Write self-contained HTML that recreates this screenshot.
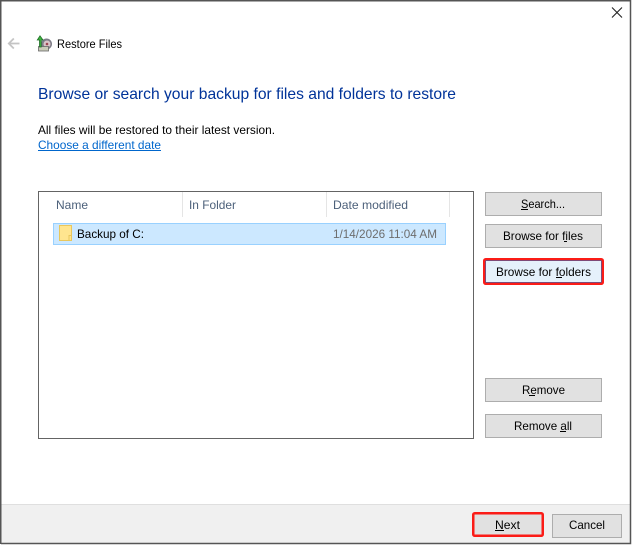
<!DOCTYPE html>
<html lang="en"><head><meta charset="utf-8"><title>Restore Files</title>
<style>
html,body{margin:0;padding:0;background:#fff;width:633px;height:546px;overflow:hidden}
svg{display:block}
text{font-family:"Liberation Sans",Arial,sans-serif;font-size:12px;fill:#000}
</style></head><body>
<svg width="633" height="546" viewBox="0 0 633 546" xmlns="http://www.w3.org/2000/svg">
<rect width="633" height="546" fill="#fff"/>
<rect x="1" y="504" width="629" height="39" fill="#f0f0f0"/>
<rect x="1" y="504" width="629" height="1" fill="#dfdfdf"/>
<path d="M.75 544V.75H630.5V543.5H1" fill="none" stroke="#555" stroke-width="1.5"/>

<path d="M612 7.5l10 10M622 7.5l-10 10" stroke="#222" stroke-width="1.1" fill="none"/>
<path d="M19.500 43.500H9M13.800 38.500l-5 5 5 5" stroke="#c4c4c4" stroke-width="1.800" fill="none"/>

<g>
<ellipse cx="46.500" cy="44" rx="5.500" ry="5.500" fill="#7d7d88"/>
<ellipse cx="47" cy="44" rx="3.500" ry="3.500" fill="#d8c4c8"/>
<circle cx="47" cy="44" r="1.300" fill="#9a4450"/>
<rect x="38.500" y="46.500" width="10" height="4.500" fill="#c9cbb8" stroke="#666" stroke-width=".8"/>
<path d="M39.500 47V40H37.300L40 35.800l3 4.200h-1.800V47z" fill="#3fb53f" stroke="#1f6f26" stroke-width=".8"/>
</g>
<text x="57" y="48" textLength="65" lengthAdjust="spacingAndGlyphs">Restore Files</text>

<text x="38" y="99" style="font-size:16px;fill:#003399" textLength="418" lengthAdjust="spacingAndGlyphs">Browse or search your backup for files and folders to restore</text>
<text x="38" y="134" textLength="237" lengthAdjust="spacingAndGlyphs">All files will be restored to their latest version.</text>
<text x="38" y="149" style="fill:#0066cc" textLength="123" lengthAdjust="spacingAndGlyphs">Choose a different date</text>
<rect x="38" y="150" width="123" height="1" fill="#0066cc"/>

<rect x="38.500" y="191.500" width="435" height="247" fill="#fff" stroke="#646464"/>
<rect x="182" y="192" width="1" height="25" fill="#e5e5e5"/>
<rect x="326" y="192" width="1" height="25" fill="#e5e5e5"/>
<rect x="449" y="192" width="1" height="25" fill="#e5e5e5"/>
<text x="56" y="209" style="fill:#4c607a" textLength="32" lengthAdjust="spacingAndGlyphs">Name</text>
<text x="189" y="209" style="fill:#4c607a" textLength="47" lengthAdjust="spacingAndGlyphs">In Folder</text>
<text x="333" y="209" style="fill:#4c607a" textLength="75" lengthAdjust="spacingAndGlyphs">Date modified</text>

<rect x="53.500" y="223.500" width="392" height="21" fill="#cce8ff" stroke="#99d1ff"/>
<path d="M59.500 225.500H71.500V240.500H59.500z" fill="#ffe58f" stroke="#e9c75c"/>
<path d="M69 240.500V235.500H71.500" fill="none" stroke="#e9c75c"/>
<text x="77" y="238" textLength="67" lengthAdjust="spacingAndGlyphs">Backup of C:</text>
<text x="333" y="238" style="fill:#6d6d6d" textLength="104" lengthAdjust="spacingAndGlyphs">1/14/2026 11:04 AM</text>

<rect x="485.500" y="192.500" width="116" height="23" fill="#e1e1e1" stroke="#adadad"/>
<text x="521" y="208" textLength="44" lengthAdjust="spacingAndGlyphs">Search...</text>
<rect x="521" y="209" width="7" height="1" fill="#000"/>

<rect x="485.500" y="224.500" width="116" height="23" fill="#e1e1e1" stroke="#adadad"/>
<text x="503" y="240" textLength="80" lengthAdjust="spacingAndGlyphs">Browse for files</text>
<rect x="564" y="241" width="3" height="1" fill="#000"/>

<rect x="485.500" y="260.500" width="116" height="22" fill="#e5f1fb" stroke="#0078d7"/>
<rect x="484.250" y="259.250" width="118.500" height="24.500" rx="1.500" fill="none" stroke="#fb1c17" stroke-width="2.500"/>
<text x="496" y="276" textLength="95" lengthAdjust="spacingAndGlyphs">Browse for folders</text>
<rect x="556" y="277" width="6" height="1" fill="#000"/>

<rect x="485.500" y="378.500" width="116" height="23" fill="#e1e1e1" stroke="#adadad"/>
<text x="522" y="394" textLength="43" lengthAdjust="spacingAndGlyphs">Remove</text>
<rect x="529" y="395" width="6" height="1" fill="#000"/>

<rect x="485.500" y="414.500" width="116" height="23" fill="#e1e1e1" stroke="#adadad"/>
<text x="514" y="430" textLength="58" lengthAdjust="spacingAndGlyphs">Remove all</text>
<rect x="560" y="431" width="6" height="1" fill="#000"/>

<rect x="473" y="513" width="70" height="23" fill="#e1e1e1"/>
<rect x="473.250" y="513.250" width="69.500" height="22.500" rx="1.500" fill="none" stroke="#fb1c17" stroke-width="2.500"/>
<text x="495" y="529" textLength="25" lengthAdjust="spacingAndGlyphs">Next</text>
<rect x="495" y="530" width="9" height="1" fill="#000"/>

<rect x="552.500" y="514.500" width="69" height="23" fill="#e1e1e1" stroke="#adadad"/>
<text x="569" y="529" textLength="36" lengthAdjust="spacingAndGlyphs">Cancel</text>
</svg>
</body></html>
